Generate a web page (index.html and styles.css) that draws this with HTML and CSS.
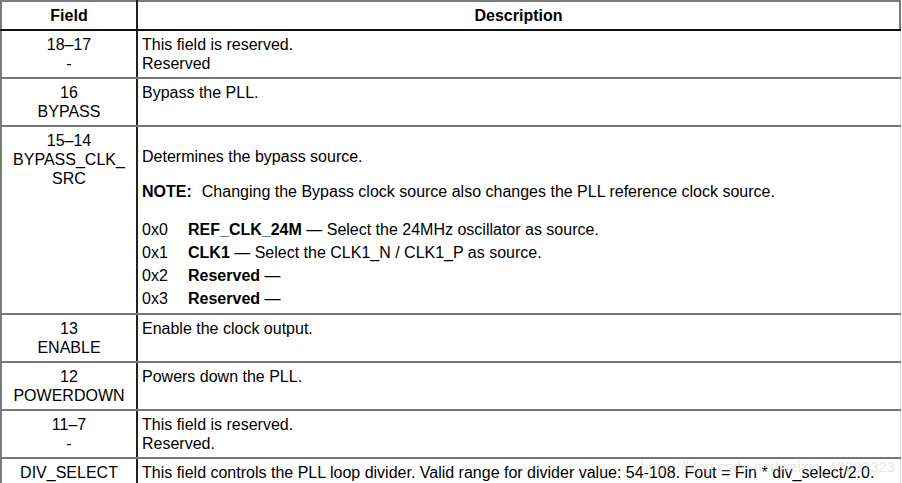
FILE: index.html
```html
<!DOCTYPE html>
<html>
<head>
<meta charset="utf-8">
<link rel="stylesheet" href="styles.css">
</head>
<body>
<div class="page">
<table class="regs">
  <colgroup><col class="col-field"><col class="col-desc"></colgroup>
  <thead>
    <tr><th class="h-field">Field</th><th class="h-desc">Description</th></tr>
  </thead>
  <tbody>
    <tr>
      <td class="field">18–17<br>-</td>
      <td class="desc">This field is reserved.<br>Reserved</td>
    </tr>
    <tr>
      <td class="field">16<br>BYPASS</td>
      <td class="desc">Bypass the PLL.</td>
    </tr>
    <tr>
      <td class="field tall">15–14<br>BYPASS_CLK_<br>SRC</td>
      <td class="desc tall">
        <p class="lead">Determines the bypass source.</p>
        <p class="note"><b>NOTE:</b><span class="note-text">Changing the Bypass clock source also changes the PLL reference clock source.</span></p>
        <ul class="enum">
          <li><span class="code">0x0</span><b>REF_CLK_24M</b> — Select the 24MHz oscillator as source.</li>
          <li><span class="code">0x1</span><b>CLK1</b> — Select the CLK1_N / CLK1_P as source.</li>
          <li><span class="code">0x2</span><b>Reserved</b> —</li>
          <li><span class="code">0x3</span><b>Reserved</b> —</li>
        </ul>
      </td>
    </tr>
    <tr>
      <td class="field">13<br>ENABLE</td>
      <td class="desc">Enable the clock output.</td>
    </tr>
    <tr>
      <td class="field">12<br>POWERDOWN</td>
      <td class="desc">Powers down the PLL.</td>
    </tr>
    <tr>
      <td class="field">11–7<br>-</td>
      <td class="desc">This field is reserved.<br>Reserved.</td>
    </tr>
    <tr>
      <td class="field">DIV_SELECT</td>
      <td class="desc">This field controls the PLL loop divider. Valid range for divider value: 54-108. Fout = Fin * div_select/2.0.</td>
    </tr>
  </tbody>
</table>
<div class="watermark">https://blog.csdn.net/weixin_43992323</div>
</div>
</body>
</html>
```
FILE: styles.css
```css
html, body {
  margin: 0;
  padding: 0;
  background: #fff;
}
.page {
  position: relative;
  width: 902px;
  height: 483px;
  overflow: hidden;
  font-family: "Liberation Sans", Arial, sans-serif;
  font-size: 16px;
  color: #000;
}
.regs {
  border-collapse: collapse;
  width: 901px;
  table-layout: fixed;
}
.col-field { width: 136px; }
.regs th {
  font-weight: bold;
  text-align: center;
  height: 27px;
  padding: 0;
  line-height: 19px;
  border-top: 2px solid #7a7a7a;
  border-bottom: 2px solid #111;
}
.h-field {
  border-left: 2px solid #7a7a7a;
  border-right: 2px solid #222;
}
.h-desc {
  border-right: 2px solid #7a7a7a;
}
.regs td {
  vertical-align: top;
  line-height: 19px;
  padding: 4px 4px 4px 4px;
  height: 38px;
  border-bottom: 2px solid #777;
}
.regs td.tall {
  padding-bottom: 3px;
}
.regs td.field {
  text-align: center;
  border-left: 2px solid #7a7a7a;
  border-right: 2px solid #222;
  padding-left: 1px;
  padding-right: 1px;
}
.regs td.desc {
  text-align: left;
  border-right: 1px solid #e4e4e4;
  white-space: nowrap;
}
.lead {
  margin: 16px 0 0 0;
}
.note {
  margin: 16px 0 0 0;
}
.note-text {
  margin-left: 10px;
}
.enum {
  list-style: none;
  margin: 17px 0 0 0;
  padding: 0;
}
.enum li {
  line-height: 23px;
}
.code {
  display: inline-block;
  width: 46px;
}
.watermark {
  position: absolute;
  left: 640px;
  top: 458px;
  font-size: 15px;
  color: rgba(200, 200, 200, 0.45);
  white-space: nowrap;
}
```
